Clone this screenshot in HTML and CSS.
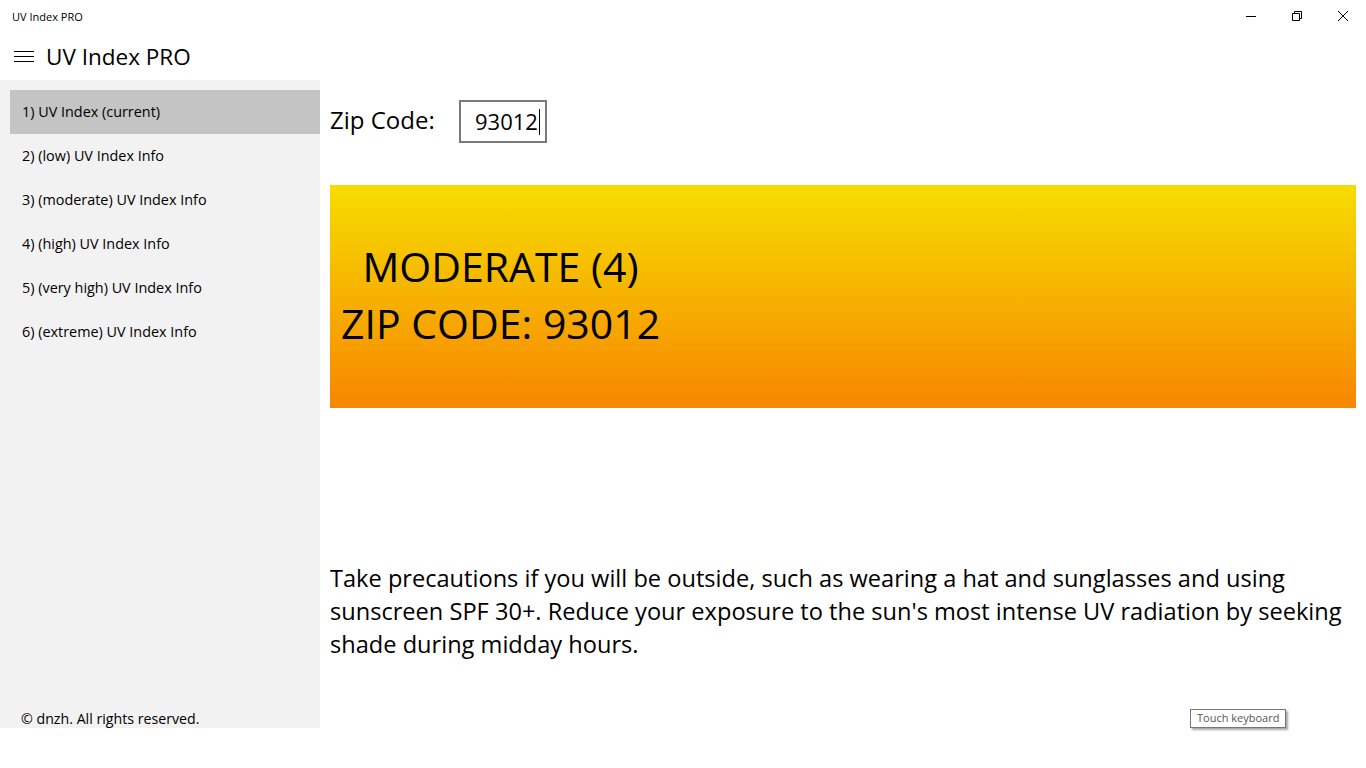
FILE: index.html
```html
<!DOCTYPE html>
<html>
<head>
<meta charset="utf-8">
<link rel="stylesheet" href="styles.css">
</head>
<body>
<div class="window">
  <div class="titlebar">
    <div class="wintitle">UV Index PRO</div>
    <div class="controls">
      <div class="ctl"><svg width="10" height="10" viewBox="0 0 10 10"><path d="M0 5.5h10" stroke="#000" stroke-width="1"/></svg></div>
      <div class="ctl"><svg width="10" height="10" viewBox="0 0 10 10"><path d="M0.5 2.5h7v7h-7z M2.5 2.5v-2h7v7h-2" fill="none" stroke="#000" stroke-width="1"/></svg></div>
      <div class="ctl"><svg width="10" height="10" viewBox="0 0 10 10"><path d="M0 0L10 10M10 0L0 10" stroke="#000" stroke-width="1"/></svg></div>
    </div>
  </div>
  <div class="header">
    <div class="hamburger"><svg width="20" height="14" viewBox="0 0 20 14"><path d="M0 1.5h20M0 6.5h20M0 11.5h20" stroke="#000" stroke-width="1"/></svg></div>
    <div class="apptitle">UV Index PRO</div>
  </div>
  <div class="content">
    <nav class="sidebar">
      <ul class="menu">
        <li class="item selected">1) UV Index (current)</li>
        <li class="item">2) (low) UV Index Info</li>
        <li class="item">3) (moderate) UV Index Info</li>
        <li class="item">4) (high) UV Index Info</li>
        <li class="item">5) (very high) UV Index Info</li>
        <li class="item">6) (extreme) UV Index Info</li>
      </ul>
      <div class="footer">© dnzh. All rights reserved.</div>
    </nav>
    <main class="main">
      <div class="ziprow">
        <label class="ziplabel">Zip Code:</label>
        <div class="zipbox">93012<span class="caret"></span></div>
      </div>
      <div class="panel">
        <div class="paneltext">
          <div>MODERATE (4)</div>
          <div>ZIP CODE: 93012</div>
        </div>
      </div>
      <p class="advice">Take precautions if you will be outside, such as wearing a hat and sunglasses and using sunscreen SPF 30+. Reduce your exposure to the sun's most intense UV radiation by seeking shade during midday hours.</p>
    </main>
  </div>
</div>
<div class="tooltip">Touch keyboard</div>
</body>
</html>
```
FILE: styles.css
```css
* { box-sizing: border-box; }
html, body { margin: 0; padding: 0; background: #fff; }
body {
  width: 1366px;
  height: 768px;
  overflow: hidden;
  font-family: "Open Sans", "Noto Sans", sans-serif;
  color: #000;
  position: relative;
}
.window { height: 728px; display: flex; flex-direction: column; }
.titlebar { height: 32px; display: flex; align-items: center; justify-content: space-between; }
.wintitle { font-size: 11px; padding-left: 12px; }
.controls { display: flex; height: 32px; }
.ctl { width: 46px; height: 32px; display: flex; align-items: center; justify-content: center; }
.header { height: 48px; display: flex; align-items: center; }
.hamburger { width: 46px; display: flex; align-items: center; padding-left: 14px; padding-top: 2px; }
.apptitle { font-size: 22.5px; font-weight: 400; padding-top: 1px; }
.content { flex: 1; display: flex; }
.sidebar { width: 320px; background: #f2f2f2; display: flex; flex-direction: column; padding-top: 10px; }
.menu { list-style: none; margin: 0; padding: 0; flex: 1; }
.item { height: 44px; margin-left: 10px; padding-left: 12px; padding-bottom: 2px; display: flex; align-items: center; font-size: 14.4px; }
.item.selected { background: #c4c4c4; }
.footer { font-size: 14.2px; padding-left: 21px; height: 20px; line-height: 20px; padding-top: 1px; }
.main { flex: 1; padding: 20px 10px 0 10px; display: flex; flex-direction: column; }
.ziprow { display: flex; align-items: center; height: 43px; }
.ziplabel { font-size: 24px; width: 129px; padding-bottom: 5px; }
.zipbox { width: 88px; height: 43px; border: 2px solid #7a7a7a; font-size: 22px; padding-left: 14px; padding-bottom: 2px; display: flex; align-items: center; }
.caret { display: inline-block; width: 1px; height: 26px; background: #000; margin-left: 1px; margin-top: 2px; }
.panel { margin-top: 42px; height: 223px; background: linear-gradient(#f6dd00, #f78600); display: flex; align-items: center; padding-left: 11px; padding-bottom: 4px; }
.paneltext { text-align: center; font-size: 41px; line-height: 57px; }
.advice { margin: 154px 0 0 0; font-size: 23.6px; line-height: 33px; }
.tooltip { position: absolute; left: 1190px; top: 709px; height: 19px; padding: 0 6px; border: 1px solid #767676; background: #fff; font-size: 11px; color: #555; line-height: 15px; box-shadow: 2px 2px 2px rgba(0,0,0,0.35); }
```
